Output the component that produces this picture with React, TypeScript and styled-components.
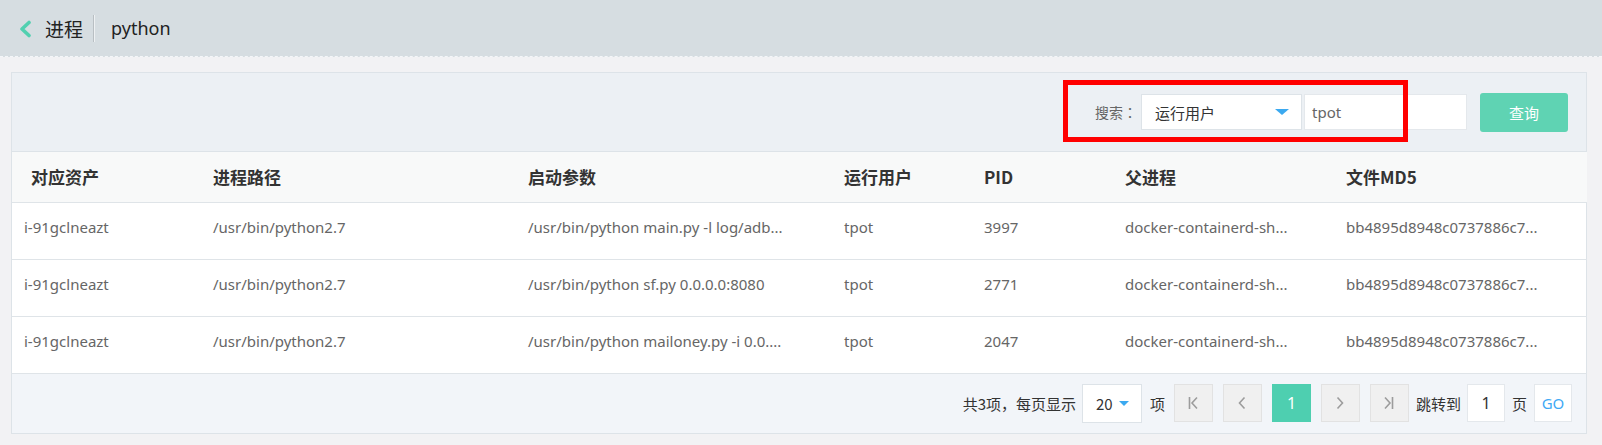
import React from "react";
import styled, { createGlobalStyle } from "styled-components";

const Global = createGlobalStyle`
  html, body {
    margin: 0;
    padding: 0;
    background: #f2f2f4;
    font-family: "Noto Sans", "Noto Sans CJK SC", sans-serif;
  }
  * { box-sizing: border-box; }
`;

const Page = styled.div`
  width: 1602px;
  min-height: 445px;
  background: #f2f2f4;
`;

const TopBar = styled.header`
  height: 57px;
  background: #d6dde1;
  border-bottom: 1px dashed #f4f6f8;
  display: flex;
  align-items: center;
  padding-left: 18px;
`;

const BackIcon = styled.svg`
  width: 15px;
  height: 18px;
  margin-right: 12px;
  margin-top: 1px;
`;

const Title = styled.span`
  font-family: "Noto Sans CJK SC", sans-serif;
  font-size: 19px;
  color: #222;
  line-height: 1;
`;

const Divider = styled.span`
  width: 1px;
  height: 27px;
  background: #b9bfc3;
  box-shadow: 1px 0 0 #eef1f3;
  margin: 0 17px 0 10px;
`;

const SubTitle = styled.span`
  font-size: 18px;
  color: #222;
  line-height: 1;
`;

const Content = styled.main`
  padding: 15px 15px 13px 11px;
`;

const Panel = styled.section`
  border: 1px solid #dde3e8;
  background: #fff;
`;

const Toolbar = styled.div`
  position: relative;
  height: 79px;
  background: #ecf0f4;
  border-bottom: 1px solid #dde3e8;
  display: flex;
  align-items: center;
  justify-content: flex-end;
  padding-right: 18px;
`;

const SearchLabel = styled.span`
  font-family: "Noto Sans CJK TC", "Noto Sans CJK SC", sans-serif;
  font-size: 14px;
  color: #666;
  margin-right: 4px;
`;

const Select = styled.div<{ $width: number; $height: number }>`
  width: ${(p) => p.$width}px;
  height: ${(p) => p.$height}px;
  background: #fff;
  border: 1px solid #dde3e8;
  display: flex;
  align-items: center;
  justify-content: space-between;
  padding: 0 12px 0 13px;
  font-family: "Noto Sans CJK SC", sans-serif;
  font-size: 15px;
  color: #333;
`;

const Caret = styled.span<{ $size: number }>`
  width: 0;
  height: 0;
  border-left: ${(p) => p.$size}px solid transparent;
  border-right: ${(p) => p.$size}px solid transparent;
  border-top: ${(p) => Math.round(p.$size * 0.9)}px solid #3ba9f0;
`;

const TextBox = styled.div`
  width: 163px;
  height: 36px;
  margin-left: 2px;
  background: #fff;
  border: 1px solid #e4e8ec;
  display: flex;
  align-items: center;
  padding-left: 7px;
  font-size: 15px;
  color: #666;
`;

const QueryButton = styled.button`
  width: 88px;
  height: 39px;
  margin-left: 13px;
  border: none;
  border-radius: 3px;
  background: #5fd3b3;
  color: #fff;
  font-family: "Noto Sans CJK SC", sans-serif;
  font-size: 15px;
  cursor: pointer;
`;

const Highlight = styled.div`
  position: absolute;
  top: 7px;
  right: 178px;
  width: 345px;
  height: 62px;
  border: 5px solid #ff0000;
  pointer-events: none;
`;

const Table = styled.table`
  width: 100%;
  border-collapse: collapse;
  table-layout: fixed;
`;

const HeadCell = styled.th`
  height: 50px;
  background: #f8f9f9;
  border-bottom: 1px solid #dfe4e8;
  text-align: left;
  padding: 0 12px;
  font-family: "Noto Sans CJK SC", sans-serif;
  font-weight: 700;
  font-size: 17px;
  color: #333;
  &:first-child { padding-left: 19px; }
`;

const Cell = styled.td`
  height: 57px;
  border-bottom: 1px solid #dfe4e8;
  padding: 0 12px 7px;
  font-size: 15px;
  color: #666;
  white-space: nowrap;
  overflow: hidden;
`;

const Footer = styled.div`
  height: 59px;
  background: #f2f5f9;
  display: flex;
  align-items: center;
  justify-content: flex-end;
  padding-right: 14px;
  font-family: "Noto Sans CJK SC", sans-serif;
  font-size: 15px;
  color: #333;
`;

const PagerText = styled.span<{ $ml?: number; $mr?: number }>`
  margin-left: ${(p) => p.$ml ?? 0}px;
  margin-right: ${(p) => p.$mr ?? 0}px;
  white-space: nowrap;
`;

const PageButton = styled.div<{ $active?: boolean }>`
  width: 39px;
  height: 38px;
  margin-right: 10px;
  display: flex;
  align-items: center;
  justify-content: center;
  background: ${(p) => (p.$active ? "#4ecfb0" : "#f0f0f0")};
  border: 1px solid ${(p) => (p.$active ? "#4ecfb0" : "#e2e2e2")};
  color: ${(p) => (p.$active ? "#fff" : "#aaa")};
  font-family: "Noto Sans", sans-serif;
  font-size: 16px;
  &:last-of-type { margin-right: 0; }
`;

const JumpBox = styled.div`
  width: 38px;
  height: 38px;
  margin: 0 7px 0 6px;
  background: #fff;
  border: 1px solid #e4e8ec;
  display: flex;
  align-items: center;
  justify-content: center;
  font-family: "Noto Sans", sans-serif;
  font-size: 16px;
  color: #333;
`;

const GoButton = styled.div`
  width: 38px;
  height: 38px;
  margin-left: 7px;
  background: #fff;
  border: 1px solid #e4e8ec;
  display: flex;
  align-items: center;
  justify-content: center;
  font-family: "Noto Sans", sans-serif;
  font-size: 15px;
  color: #3fa9f5;
`;

const Pager = styled.div`
  display: flex;
  align-items: center;
  margin-left: 9px;
  margin-right: 7px;
`;

const columns = [
  { title: "对应资产", width: 189 },
  { title: "进程路径", width: 315 },
  { title: "启动参数", width: 316 },
  { title: "运行用户", width: 140 },
  { title: "PID", width: 141 },
  { title: "父进程", width: 221 },
  { title: "文件MD5", width: 253 },
];

const rows = [
  ["i-91gclneazt", "/usr/bin/python2.7", "/usr/bin/python main.py -l log/adb...", "tpot", "3997", "docker-containerd-sh...", "bb4895d8948c0737886c7..."],
  ["i-91gclneazt", "/usr/bin/python2.7", "/usr/bin/python sf.py 0.0.0.0:8080", "tpot", "2771", "docker-containerd-sh...", "bb4895d8948c0737886c7..."],
  ["i-91gclneazt", "/usr/bin/python2.7", "/usr/bin/python mailoney.py -i 0.0....", "tpot", "2047", "docker-containerd-sh...", "bb4895d8948c0737886c7..."],
];

const Icon = ({ d }: { d: string }) => (
  <svg width="16" height="18" viewBox="0 0 16 18" fill="none" stroke="#9c9c9c" strokeWidth="1.6">
    <path d={d} />
  </svg>
);

export default function App() {
  return (
    <Page>
      <Global />
      <TopBar>
        <BackIcon viewBox="0 0 15 18">
          <polyline points="11,2.5 4,9 11,15.5" fill="none" stroke="#52d0b0" strokeWidth="3.6" strokeLinecap="round" strokeLinejoin="round" />
        </BackIcon>
        <Title>进程</Title>
        <Divider />
        <SubTitle>python</SubTitle>
      </TopBar>
      <Content>
        <Panel>
          <Toolbar>
            <SearchLabel>搜索：</SearchLabel>
            <Select $width={161} $height={36}>
              运行用户
              <Caret $size={7} />
            </Select>
            <TextBox>tpot</TextBox>
            <QueryButton>查询</QueryButton>
            <Highlight />
          </Toolbar>
          <Table>
            <colgroup>
              {columns.map((c) => (
                <col key={c.title} style={{ width: c.width }} />
              ))}
            </colgroup>
            <thead>
              <tr>
                {columns.map((c) => (
                  <HeadCell key={c.title}>{c.title}</HeadCell>
                ))}
              </tr>
            </thead>
            <tbody>
              {rows.map((r, i) => (
                <tr key={i}>
                  {r.map((v, j) => (
                    <Cell key={j}>{v}</Cell>
                  ))}
                </tr>
              ))}
            </tbody>
          </Table>
          <Footer>
            <PagerText $mr={6}>共3项，每页显示</PagerText>
            <Select $width={60} $height={39}>
              20
              <Caret $size={5} />
            </Select>
            <PagerText $ml={8}>项</PagerText>
            <Pager>
              <PageButton><Icon d="M4.5 3v12M12 3.5L7 9l5 5.5" /></PageButton>
              <PageButton><Icon d="M10.5 3.5L5.5 9l5 5.5" /></PageButton>
              <PageButton $active>1</PageButton>
              <PageButton><Icon d="M5.5 3.5l5 5.5-5 5.5" /></PageButton>
              <PageButton><Icon d="M11.5 3v12M4 3.5L9 9l-5 5.5" /></PageButton>
            </Pager>
            <PagerText>跳转到</PagerText>
            <JumpBox>1</JumpBox>
            <PagerText>页</PagerText>
            <GoButton>GO</GoButton>
          </Footer>
        </Panel>
      </Content>
    </Page>
  );
}
